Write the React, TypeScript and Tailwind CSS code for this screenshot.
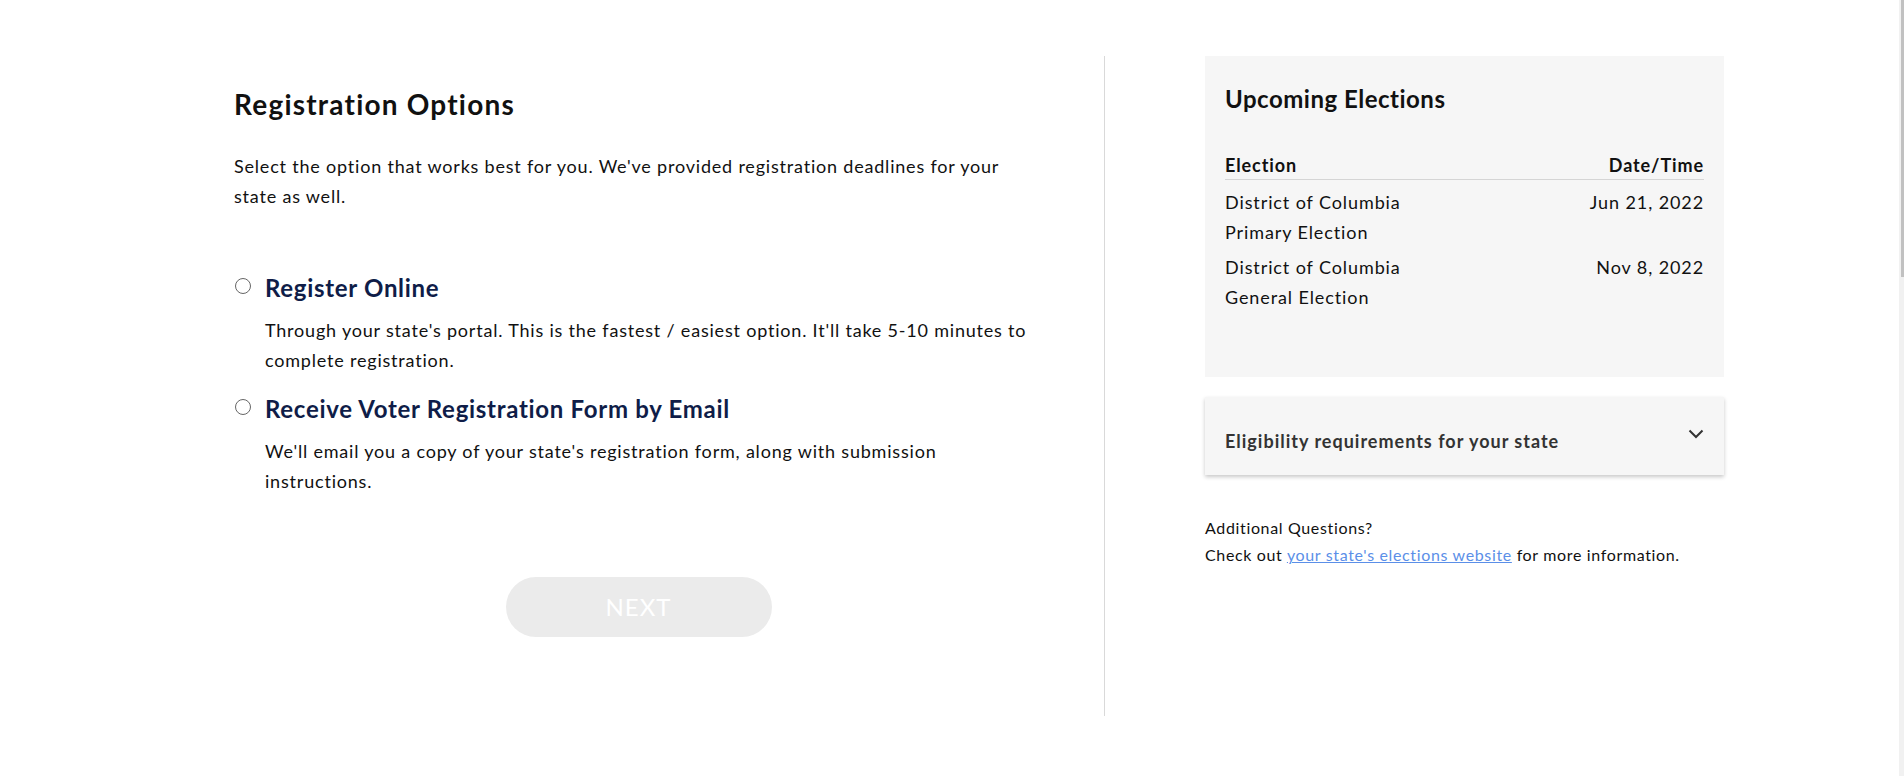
import React from "react";

function Radio() {
  return (
    <span className="mt-[5px] ml-[1px] mr-[14px] inline-block w-[16px] h-[16px] shrink-0 rounded-full border-[1.5px] border-[#666] bg-white" />
  );
}

function Option({ title, desc, className }: { title: string; desc: string; className?: string }) {
  return (
    <div className={className}>
      <div className="flex items-start">
        <Radio />
        <span className="text-[24px] leading-[30px] font-bold tracking-[0.7px] text-[#0f1d48]">{title}</span>
      </div>
      <p className="mt-[12px] pl-[31px] text-[18px] leading-[30px] tracking-[0.8px] text-[#111]">{desc}</p>
    </div>
  );
}

export default function App() {
  return (
    <div className="relative min-h-screen bg-white font-['Lato',sans-serif] text-[#111]">
      <div className="flex pt-[56px] pl-[234px]">
        <div className="w-[809px] mr-[61px] pt-[31px]">
          <h1 className="text-[28px] leading-[34px] font-bold tracking-[1.2px] text-[#111]">Registration Options</h1>
          <p className="mt-[30px] max-w-[790px] text-[18px] leading-[30px] tracking-[0.8px]">
            Select the option that works best for you. We've provided registration deadlines for your state as well.
          </p>
          <Option
            className="mt-[62px]"
            title="Register Online"
            desc="Through your state's portal. This is the fastest / easiest option. It'll take 5-10 minutes to complete registration."
          />
          <Option
            className="mt-[19px]"
            title="Receive Voter Registration Form by Email"
            desc="We'll email you a copy of your state's registration form, along with submission instructions."
          />
          <div className="mt-[81px] flex justify-center">
            <button className="w-[266px] h-[60px] rounded-full bg-[#ebebeb] text-white text-[24px] leading-[30px] tracking-[1px]">
              NEXT
            </button>
          </div>
        </div>
        <div className="w-px h-[660px] bg-[#d9d9d9]" />
        <div className="pl-[100px]">
          <div className="w-[519px] h-[321px] bg-[#f6f6f6] px-[20px] pt-[28px]">
            <h2 className="text-[24px] leading-[30px] font-bold tracking-[0.5px] text-[#111]">Upcoming Elections</h2>
            <div className="mt-[37px] flex justify-between border-b border-[#d5d5d5] text-[18px] leading-[28px] font-bold tracking-[0.9px]">
              <span>Election</span>
              <span>Date/Time</span>
            </div>
            <div className="mt-[7px] flex justify-between text-[18px] leading-[30px] tracking-[0.9px]">
              <span>
                District of Columbia
                <br />
                Primary Election
              </span>
              <span>Jun 21, 2022</span>
            </div>
            <div className="mt-[5px] flex justify-between text-[18px] leading-[30px] tracking-[0.9px]">
              <span>
                District of Columbia
                <br />
                General Election
              </span>
              <span>Nov 8, 2022</span>
            </div>
          </div>
          <div className="mt-[20px] w-[519px] h-[78px] bg-[#f6f6f6] shadow-[0_2px_4px_rgba(0,0,0,0.22)] flex items-center justify-between pl-[20px] pr-[20px]">
            <span className="pt-[10px] text-[18px] leading-[30px] font-bold tracking-[1px] text-[#333]">
              Eligibility requirements for your state
            </span>
            <span className="pb-[4px]">
              <svg width="16" height="10" viewBox="0 0 16 10" fill="none">
                <polyline points="1.5,1.5 8,8 14.5,1.5" stroke="#333" strokeWidth="2" />
              </svg>
            </span>
          </div>
          <div className="mt-[39px] text-[16px] leading-[27px] tracking-[0.65px] text-[#111]">
            <div>Additional Questions?</div>
            <div>
              Check out{" "}
              <a href="#" className="text-[#5b8fe8] underline">
                your state's elections website
              </a>{" "}
              for more information.
            </div>
          </div>
        </div>
      </div>
      <div className="fixed top-0 right-0 w-[5px] h-full bg-[#f1f1f1]">
        <div className="ml-[1.5px] w-[3.5px] h-[277px] bg-[#c1c1c1]" />
      </div>
    </div>
  );
}
